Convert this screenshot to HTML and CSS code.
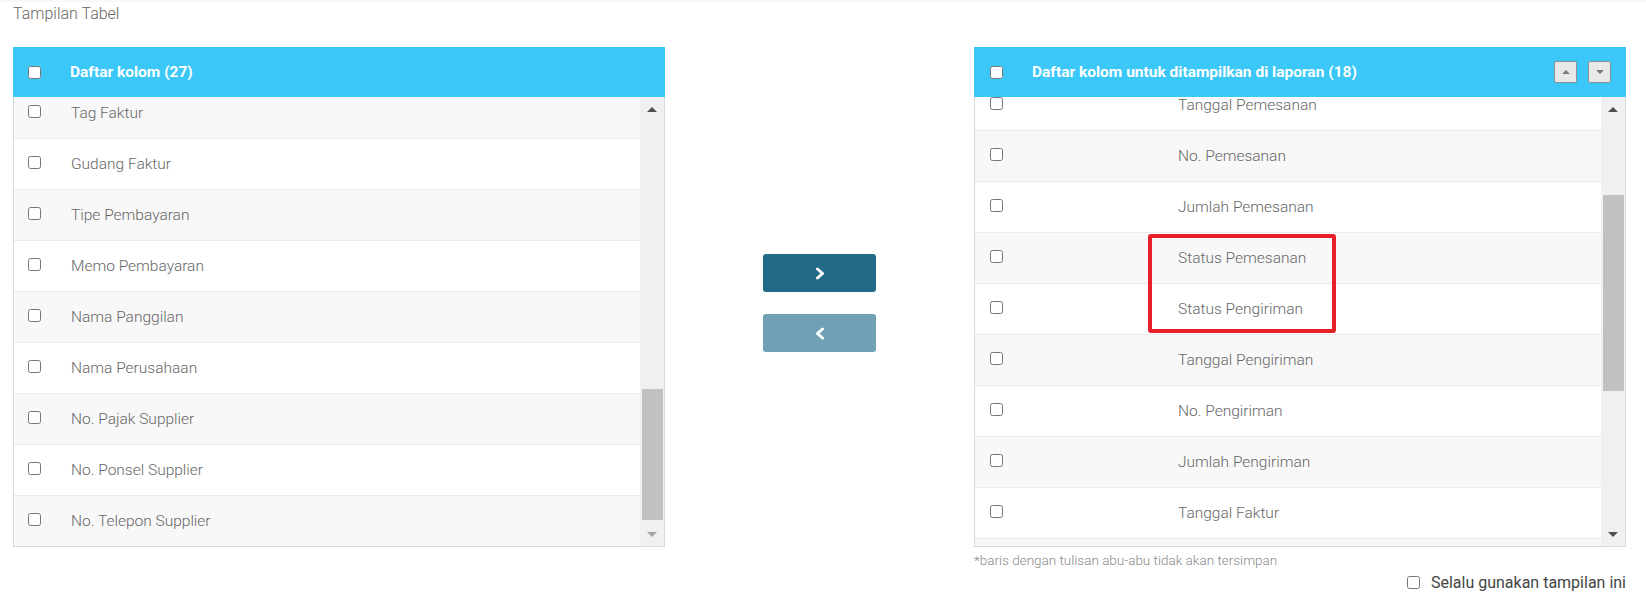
FILE: index.html
```html
<!DOCTYPE html>
<html lang="id">
<head>
    <meta charset="UTF-8">
    <meta name="viewport" content="width=device-width, initial-scale=1.0">
    <title>Tampilan Tabel</title>
    <link rel="stylesheet" href="styles.css">
</head>
<body>
    <div class="page">
        <div class="page-title">Tampilan Tabel</div>

        <div class="columns">
            <!-- kolom yang tersedia -->
            <div class="panel panel-left">
                <div class="panel-head">
                    <input type="checkbox" class="head-check">
                    <span class="head-title">Daftar kolom (27)</span>
                </div>
                <div class="panel-body">
                    <div class="list">
                        <div class="rows rows-left">
                            <div class="row odd"><span class="cell-check"><input type="checkbox"></span><span class="cell-name">Tag Faktur</span></div>
                            <div class="row"><span class="cell-check"><input type="checkbox"></span><span class="cell-name">Gudang Faktur</span></div>
                            <div class="row odd"><span class="cell-check"><input type="checkbox"></span><span class="cell-name">Tipe Pembayaran</span></div>
                            <div class="row"><span class="cell-check"><input type="checkbox"></span><span class="cell-name">Memo Pembayaran</span></div>
                            <div class="row odd"><span class="cell-check"><input type="checkbox"></span><span class="cell-name">Nama Panggilan</span></div>
                            <div class="row"><span class="cell-check"><input type="checkbox"></span><span class="cell-name">Nama Perusahaan</span></div>
                            <div class="row odd"><span class="cell-check"><input type="checkbox"></span><span class="cell-name">No. Pajak Supplier</span></div>
                            <div class="row"><span class="cell-check"><input type="checkbox"></span><span class="cell-name">No. Ponsel Supplier</span></div>
                            <div class="row odd"><span class="cell-check"><input type="checkbox"></span><span class="cell-name">No. Telepon Supplier</span></div>
                        </div>
                    </div>
                    <div class="scrollbar">
                        <div class="sb-btn"><span class="tri-up"></span></div>
                        <div class="sb-track">
                            <div class="sb-thumb" style="margin-top: 268px; height: 131px;"></div>
                        </div>
                        <div class="sb-btn"><span class="tri-down off"></span></div>
                    </div>
                </div>
            </div>

            <!-- tombol pindah -->
            <div class="movers">
                <button class="move-btn move-right">
                    <svg width="10" height="13" viewBox="0 0 10 13"><polyline points="2.5,2 7.5,6.5 2.5,11" fill="none" stroke="#fff" stroke-width="3" stroke-linejoin="round" stroke-linecap="round"/></svg>
                </button>
                <button class="move-btn move-left">
                    <svg width="10" height="13" viewBox="0 0 10 13"><polyline points="7.5,2 2.5,6.5 7.5,11" fill="none" stroke="#fff" stroke-width="3" stroke-linejoin="round" stroke-linecap="round"/></svg>
                </button>
            </div>

            <!-- kolom yang ditampilkan -->
            <div class="right-col">
                <div class="panel panel-right">
                    <div class="panel-head">
                        <input type="checkbox" class="head-check">
                        <span class="head-title">Daftar kolom untuk ditampilkan di laporan (18)</span>
                        <div class="order-btns">
                            <button class="order-btn"><span class="mini-up"></span></button>
                            <button class="order-btn"><span class="mini-down"></span></button>
                        </div>
                    </div>
                    <div class="panel-body">
                        <div class="list">
                            <div class="rows rows-right">
                                <div class="row"><span class="cell-check wide"><input type="checkbox"></span><span class="cell-name">Tanggal Pemesanan</span></div>
                                <div class="row odd"><span class="cell-check wide"><input type="checkbox"></span><span class="cell-name">No. Pemesanan</span></div>
                                <div class="row"><span class="cell-check wide"><input type="checkbox"></span><span class="cell-name">Jumlah Pemesanan</span></div>
                                <div class="row odd"><span class="cell-check wide"><input type="checkbox"></span><span class="cell-name">Status Pemesanan</span></div>
                                <div class="row"><span class="cell-check wide"><input type="checkbox"></span><span class="cell-name">Status Pengiriman</span></div>
                                <div class="row odd"><span class="cell-check wide"><input type="checkbox"></span><span class="cell-name">Tanggal Pengiriman</span></div>
                                <div class="row"><span class="cell-check wide"><input type="checkbox"></span><span class="cell-name">No. Pengiriman</span></div>
                                <div class="row odd"><span class="cell-check wide"><input type="checkbox"></span><span class="cell-name">Jumlah Pengiriman</span></div>
                                <div class="row"><span class="cell-check wide"><input type="checkbox"></span><span class="cell-name">Tanggal Faktur</span></div>
                                <div class="row odd"></div>
                            </div>
                        </div>
                        <div class="scrollbar">
                            <div class="sb-btn"><span class="tri-up"></span></div>
                            <div class="sb-track">
                                <div class="sb-thumb" style="margin-top: 74px; height: 196px;"></div>
                            </div>
                            <div class="sb-btn"><span class="tri-down"></span></div>
                        </div>
                    </div>
                    <div class="highlight"></div>
                </div>
                <div class="footnote">*baris dengan tulisan abu-abu tidak akan tersimpan</div>
                <label class="always">
                    <input type="checkbox">
                    <span>Selalu gunakan tampilan ini</span>
                </label>
            </div>
        </div>
    </div>
</body>
</html>
```

FILE: styles.css
```css
body {
    margin: 0;
    font-family: Roboto, "Noto Sans", "Liberation Sans", sans-serif;
    background-color: #fff;
    color: #666;
}

.page {
    padding: 4px 20px 0 13px;
    box-shadow: inset 0 3px 3px -2px rgba(0, 0, 0, 0.06);
    min-height: 603px;
}

.page-title {
    font-size: 16px;
    line-height: 20px;
    font-weight: 300;
    color: #6b6560;
}

.columns {
    display: grid;
    grid-template-columns: 652px 309px 652px;
    margin-top: 23px;
}

.panel {
    position: relative;
}

.panel-head {
    height: 50px;
    background-color: #3bc8f8;
    display: flex;
    align-items: center;
    color: #fff;
    font-size: 15.5px;
    font-weight: 700;
}

.head-check {
    margin: 0 29px 0 15px;
    width: 13px;
    height: 13px;
}

.panel-right .head-check {
    margin: 0 29px 0 16px;
}

.head-title {
    flex: 1;
}

.order-btns {
    display: flex;
    gap: 11px;
    margin-right: 15px;
}

.order-btn {
    width: 23px;
    height: 22px;
    padding: 0;
    border: 1px solid #8f8f8f;
    border-radius: 2px;
    background-color: #e8e8e8;
    display: flex;
    align-items: center;
    justify-content: center;
}

.mini-up, .mini-down {
    width: 0;
    height: 0;
    border-left: 4px solid transparent;
    border-right: 4px solid transparent;
}

.mini-up {
    border-bottom: 4px solid #7a7a7a;
}

.mini-down {
    border-top: 4px solid #7a7a7a;
}

.panel-body {
    display: flex;
    height: 449px;
    border: 1px solid #d2dcdc;
    border-top: none;
}

.list {
    flex: 1;
    overflow: hidden;
}

.rows-left {
    margin-top: -9px;
}

.rows-right {
    margin-top: -17px;
}

.row {
    display: flex;
    align-items: center;
    height: 50px;
    border-bottom: 1px solid #ebebeb;
    background-color: #fff;
    font-size: 15.5px;
    font-weight: 300;
    color: #666;
}

.row.odd {
    background-color: #f8f8f8;
}

.cell-check {
    width: 57px;
    padding-left: 14px;
    box-sizing: border-box;
    display: flex;
    align-items: center;
    margin-top: -3px;
}

.cell-check.wide {
    width: 203px;
    padding-left: 15px;
}

.cell-check input {
    margin: 0;
    width: 13px;
    height: 13px;
}

.scrollbar {
    width: 24px;
    background-color: #f0f0f0;
    display: flex;
    flex-direction: column;
}

.sb-btn {
    height: 24px;
    display: flex;
    align-items: center;
    justify-content: center;
}

.tri-up, .tri-down {
    width: 0;
    height: 0;
    border-left: 5px solid transparent;
    border-right: 5px solid transparent;
}

.tri-up {
    border-bottom: 5px solid #505050;
}

.tri-down {
    border-top: 5px solid #505050;
}

.tri-down.off {
    border-top-color: #a3a3a3;
}

.sb-track {
    flex: 1;
}

.sb-thumb {
    margin-left: 2px;
    margin-right: 1px;
    background-color: #c1c1c1;
}

.highlight {
    position: absolute;
    left: 174px;
    top: 187px;
    width: 188px;
    height: 99px;
    border: 4px solid #e8202a;
    border-radius: 3px;
    box-sizing: border-box;
}

.movers {
    display: flex;
    flex-direction: column;
    align-items: center;
    gap: 22px;
    padding-top: 207px;
}

.move-btn {
    width: 113px;
    height: 38px;
    border: none;
    border-radius: 3px;
    display: flex;
    align-items: center;
    justify-content: center;
    padding: 0;
}

.move-right {
    background-color: #216a88;
}

.move-left {
    background-color: #6fa0b3;
}

.footnote {
    margin-top: 5px;
    font-size: 13.5px;
    font-weight: 300;
    color: #8a8a8a;
}

.always {
    display: flex;
    align-items: center;
    justify-content: flex-end;
    margin-top: 5px;
    font-size: 16px;
    color: #444;
}

.always input {
    margin: 0 11px 0 0;
    width: 13px;
    height: 13px;
}
```
